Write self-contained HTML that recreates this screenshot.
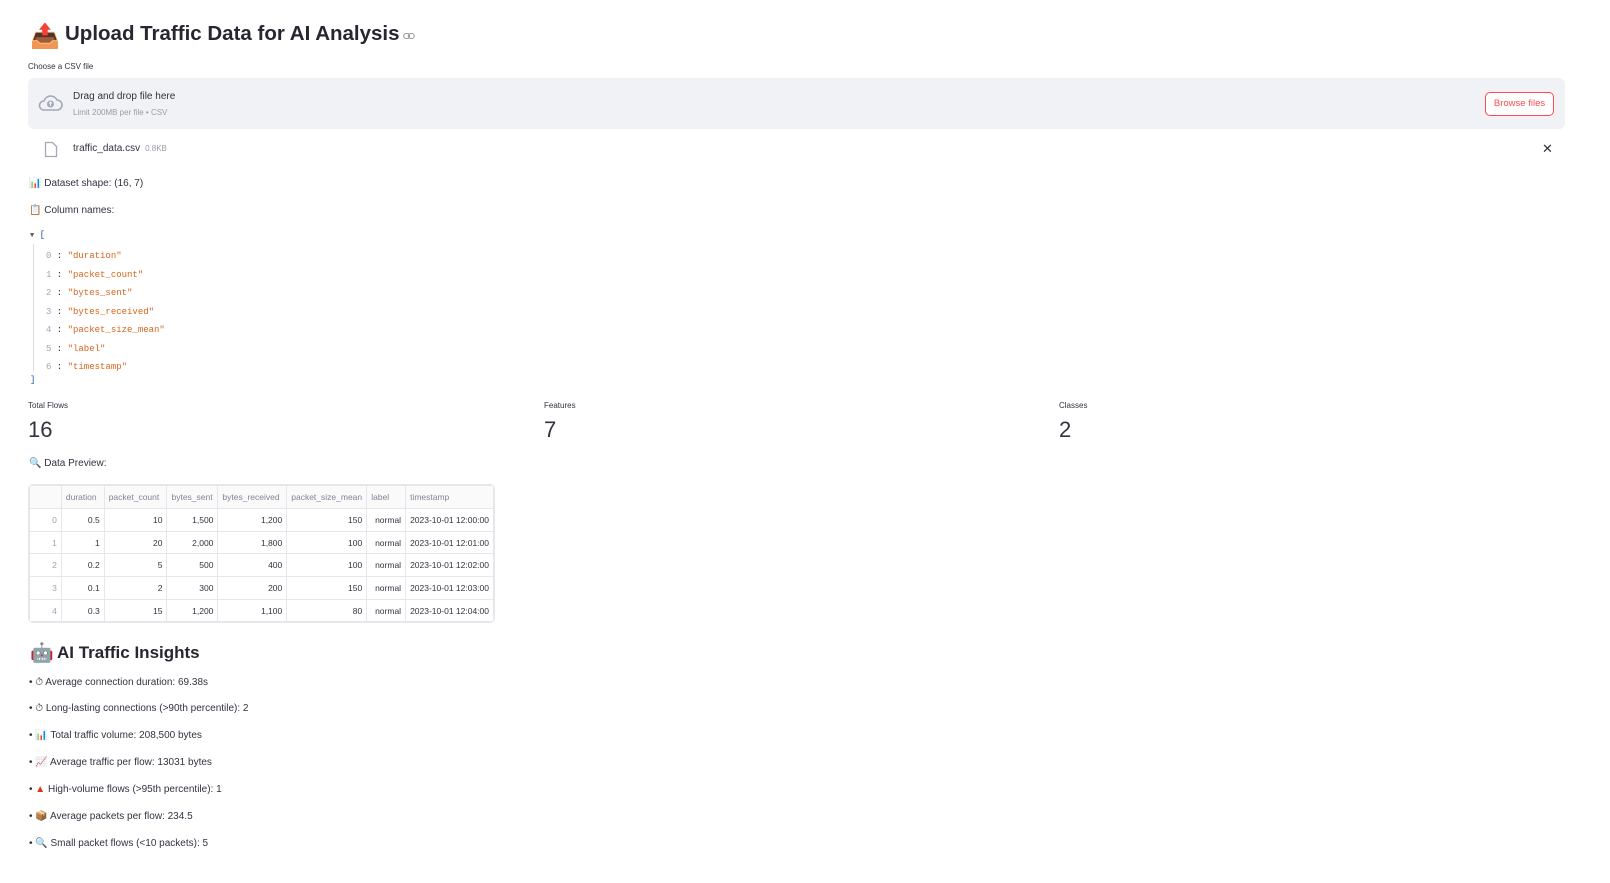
<!DOCTYPE html>
<html><head><meta charset="utf-8"><style>
*{margin:0;padding:0;box-sizing:border-box}
body{width:1610px;height:883px;background:#fff;font-family:"Liberation Sans",sans-serif;color:#31333f;position:relative;overflow:hidden}
.a{position:absolute;white-space:nowrap}
.t{font-size:10px}
.mono{font-family:"Liberation Mono",monospace;font-size:9px}
table{border-collapse:collapse;font-size:8.5px}
td,th{border:1px solid #e6e7ea;height:22.7px;padding:0 4px;text-align:right;font-weight:normal;color:#31333f}
th{color:#808495;text-align:left;background:#fafafb;height:23px}
td.i{color:#a0a3ad;text-align:right}
.ins{font-size:10px}
</style></head><body>
<div class="a" style="left:30px;top:22px;font-size:24px">📤</div>
<div class="a" style="left:65px;top:22px;font-size:20.5px;font-weight:bold;color:#262730">Upload Traffic Data for AI Analysis</div>
<svg class="a" style="left:403px;top:32px" width="12" height="8" viewBox="0 0 12 8"><rect x="0.7" y="1.5" width="6" height="5" rx="2.5" fill="none" stroke="#999" stroke-width="1.1"/><rect x="5.3" y="1.5" width="6" height="5" rx="2.5" fill="none" stroke="#999" stroke-width="1.1"/></svg>
<div class="a" style="left:28px;top:62px;font-size:8px">Choose a CSV file</div>
<div class="a" style="left:28px;top:78px;width:1537px;height:51px;background:#f0f2f6;border-radius:6px"></div>
<svg class="a" style="left:38px;top:94px" width="25" height="18" viewBox="0 0 25 18"><path d="M6 16h13a5 5 0 0 0 0-10 7 7 0 0 0-13 1 4.5 4.5 0 0 0 0 9z" fill="none" stroke="#a3a8b8" stroke-width="1.6"/><circle cx="12.5" cy="10" r="3.5" fill="#a3a8b8"/><path d="M12.5 8v4M11 9.5l1.5-1.5 1.5 1.5" stroke="#f0f2f6" stroke-width="1" fill="none"/></svg>
<div class="a t" style="left:73px;top:91px">Drag and drop file here</div>
<div class="a" style="left:73px;top:108px;font-size:8px;color:#9a9ca6">Limit 200MB per file • CSV</div>
<div class="a" style="left:1485px;top:92px;width:69px;height:24px;border:1px solid #ff4b4b;border-radius:5px;background:#fff;color:#ff4b4b;font-size:9.5px;text-align:center;line-height:22px">Browse files</div>
<svg class="a" style="left:44px;top:141px" width="14" height="17" viewBox="0 0 14 17"><path d="M1.5 1.5h7l4 4v10h-11z" fill="none" stroke="#a3a8b8" stroke-width="1.3"/></svg>
<div class="a t" style="left:73px;top:143px">traffic_data.csv <span style="font-size:8px;color:#9a9ca6">&nbsp;0.8KB</span></div>
<div class="a" style="left:1542px;top:141px;font-size:13px">✕</div>
<div class="a t" style="left:29px;top:178px">📊 Dataset shape: (16, 7)</div>
<div class="a t" style="left:29px;top:205px">📋 Column names:</div>
<div class="a mono" style="left:30px;top:230px;color:#555"><span style="font-size:7px">▼</span> <span style="color:#1c5a96">[</span></div>
<div class="a" style="left:33px;top:244px;width:1px;height:128px;background:#ddd"></div>
<div class="a mono" style="left:46px;top:247px;line-height:18.5px"><span style="color:#a0a3c0">0</span> : <span style="color:#d6651d">"duration"</span><br><span style="color:#a0a3c0">1</span> : <span style="color:#d6651d">"packet_count"</span><br><span style="color:#a0a3c0">2</span> : <span style="color:#d6651d">"bytes_sent"</span><br><span style="color:#a0a3c0">3</span> : <span style="color:#d6651d">"bytes_received"</span><br><span style="color:#a0a3c0">4</span> : <span style="color:#d6651d">"packet_size_mean"</span><br><span style="color:#a0a3c0">5</span> : <span style="color:#d6651d">"label"</span><br><span style="color:#a0a3c0">6</span> : <span style="color:#d6651d">"timestamp"</span></div>
<div class="a mono" style="left:30px;top:375px;color:#1c5a96">]</div>
<div class="a" style="left:28px;top:401px;font-size:8px">Total Flows</div>
<div class="a" style="left:28px;top:417px;font-size:22px">16</div>
<div class="a" style="left:544px;top:401px;font-size:8px">Features</div>
<div class="a" style="left:544px;top:417px;font-size:22px">7</div>
<div class="a" style="left:1059px;top:401px;font-size:8px">Classes</div>
<div class="a" style="left:1059px;top:417px;font-size:22px">2</div>
<div class="a t" style="left:29px;top:458px">🔍 Data Preview:</div>
<div class="a" style="left:28px;top:484px;border:1px solid #e6e7ea;border-radius:5px;overflow:hidden">
<table style="width:465px">
<tr><th style="width:33px"></th><th style="width:43px">duration</th><th style="width:63px">packet_count</th><th style="width:51px">bytes_sent</th><th style="width:69px">bytes_received</th><th style="width:80px">packet_size_mean</th><th style="width:39px">label</th><th>timestamp</th></tr>
<tr><td class="i">0</td><td>0.5</td><td>10</td><td>1,500</td><td>1,200</td><td>150</td><td>normal</td><td>2023-10-01 12:00:00</td></tr>
<tr><td class="i">1</td><td>1</td><td>20</td><td>2,000</td><td>1,800</td><td>100</td><td>normal</td><td>2023-10-01 12:01:00</td></tr>
<tr><td class="i">2</td><td>0.2</td><td>5</td><td>500</td><td>400</td><td>100</td><td>normal</td><td>2023-10-01 12:02:00</td></tr>
<tr><td class="i">3</td><td>0.1</td><td>2</td><td>300</td><td>200</td><td>150</td><td>normal</td><td>2023-10-01 12:03:00</td></tr>
<tr><td class="i">4</td><td>0.3</td><td>15</td><td>1,200</td><td>1,100</td><td>80</td><td>normal</td><td>2023-10-01 12:04:00</td></tr>
</table></div>
<div class="a" style="left:30px;top:641px;font-size:19px">🤖</div>
<div class="a" style="left:57px;top:643px;font-size:17px;font-weight:bold;color:#262730">AI Traffic Insights</div>
<div class="a ins" style="left:29px;top:677px">• ⏱ Average connection duration: 69.38s</div>
<div class="a ins" style="left:29px;top:703px">• ⏱ Long-lasting connections (&gt;90th percentile): 2</div>
<div class="a ins" style="left:29px;top:730px">• 📊 Total traffic volume: 208,500 bytes</div>
<div class="a ins" style="left:29px;top:757px">• 📈 Average traffic per flow: 13031 bytes</div>
<div class="a ins" style="left:29px;top:784px">• <span style="color:#e0301e">▲</span> High-volume flows (&gt;95th percentile): 1</div>
<div class="a ins" style="left:29px;top:811px">• 📦 Average packets per flow: 234.5</div>
<div class="a ins" style="left:29px;top:838px">• 🔍 Small packet flows (&lt;10 packets): 5</div>
</body></html>
